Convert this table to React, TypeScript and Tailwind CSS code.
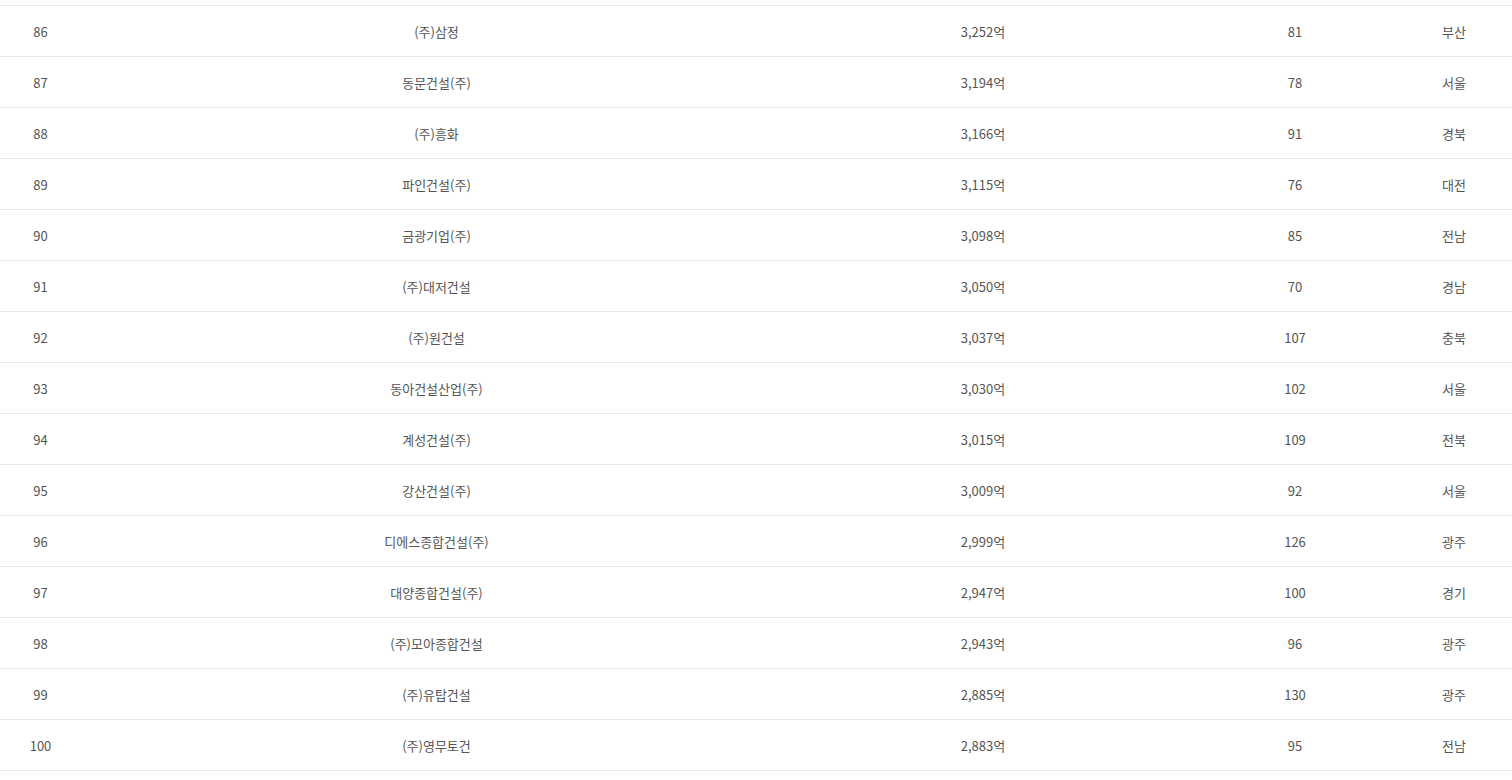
import React from 'react';

const rows: [number, string, string, number, string][] = [
  [86, '(주)삼정', '3,252억', 81, '부산'],
  [87, '동문건설(주)', '3,194억', 78, '서울'],
  [88, '(주)흥화', '3,166억', 91, '경북'],
  [89, '파인건설(주)', '3,115억', 76, '대전'],
  [90, '금광기업(주)', '3,098억', 85, '전남'],
  [91, '(주)대저건설', '3,050억', 70, '경남'],
  [92, '(주)원건설', '3,037억', 107, '충북'],
  [93, '동아건설산업(주)', '3,030억', 102, '서울'],
  [94, '계성건설(주)', '3,015억', 109, '전북'],
  [95, '강산건설(주)', '3,009억', 92, '서울'],
  [96, '디에스종합건설(주)', '2,999억', 126, '광주'],
  [97, '대양종합건설(주)', '2,947억', 100, '경기'],
  [98, '(주)모아종합건설', '2,943억', 96, '광주'],
  [99, '(주)유탑건설', '2,885억', 130, '광주'],
  [100, '(주)영무토건', '2,883억', 95, '전남'],
];

const App: React.FC = () => {
  return (
    <div
      className="w-[1512px] h-[780px] bg-white overflow-hidden text-[13px] text-[#555]"
      style={{ fontFamily: '"Noto Sans CJK KR", "Noto Sans", sans-serif' }}
    >
      <div className="h-[5px]" />
      {rows.map((r, i) => (
        <div
          key={r[0]}
          className={`grid grid-cols-[81px_711px_382px_242px_76px] items-center text-center pt-[2px] border-t border-[#e8e8e8] ${
            i === rows.length - 1 ? 'h-[52px] border-b' : 'h-[51px]'
          }`}
        >
          <div>{r[0]}</div>
          <div>{r[1]}</div>
          <div>{r[2]}</div>
          <div>{r[3]}</div>
          <div>{r[4]}</div>
        </div>
      ))}
    </div>
  );
};

export default App;
